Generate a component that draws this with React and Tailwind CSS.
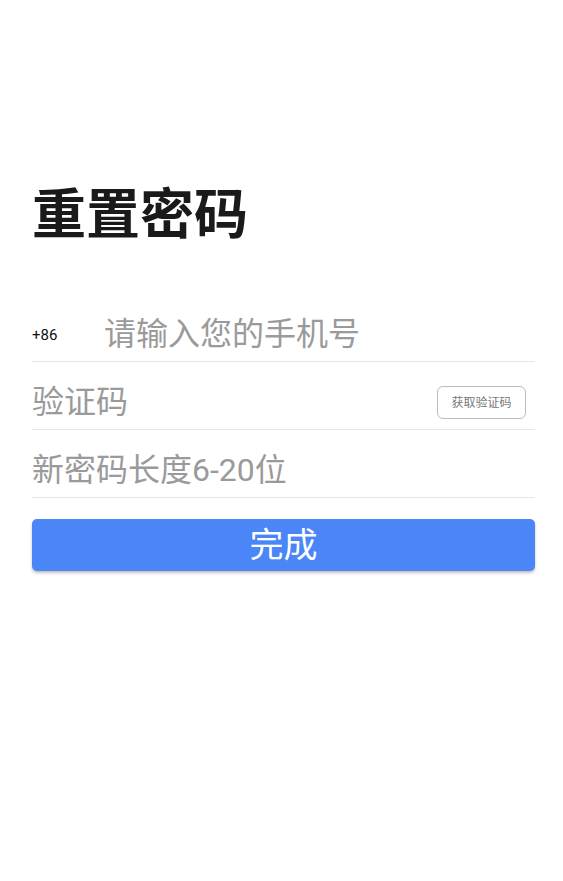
export default function App() {
  const font = { fontFamily: 'Roboto, "Noto Sans CJK SC", sans-serif' };
  return (
    <div className="w-[563px] h-[881px] bg-white" style={font}>
      <div className="pl-[32px] pr-[28px] pt-[180px]">
        <h1 className="text-[54px] leading-[62px] font-bold text-[#1a1a1a]" style={{ fontFamily: '"Noto Sans CJK SC", sans-serif' }}>
          重置密码
        </h1>
        <div className="mt-[52px]">
          <div className="h-[68px] flex items-center pt-[13px] border-b border-[#e6e6e6]">
            <span className="text-[15px] text-[#111] w-[72px] mt-[2px]">+86</span>
            <span className="text-[32px] text-[#9a9a9a]">请输入您的手机号</span>
          </div>
          <div className="h-[68px] flex items-center justify-between pt-[13px] border-b border-[#e6e6e6]">
            <span className="text-[32px] text-[#9a9a9a]">验证码</span>
            <button className="w-[89px] h-[33px] mr-[9px] mt-[1px] rounded-[6px] border border-[#bdbdbd] text-[12px] text-[#777] flex items-center justify-center">
              获取验证码
            </button>
          </div>
          <div className="h-[68px] flex items-center pt-[13px] border-b border-[#e6e6e6]">
            <span className="text-[32px] text-[#9a9a9a]">新密码长度6-20位</span>
          </div>
        </div>
        <button className="mt-[21px] w-full h-[52px] rounded-[5px] bg-[#4a86f8] text-white text-[34px] flex items-center justify-center shadow-[0_2px_3px_rgba(0,0,0,0.25)]">
          完成
        </button>
      </div>
    </div>
  );
}
